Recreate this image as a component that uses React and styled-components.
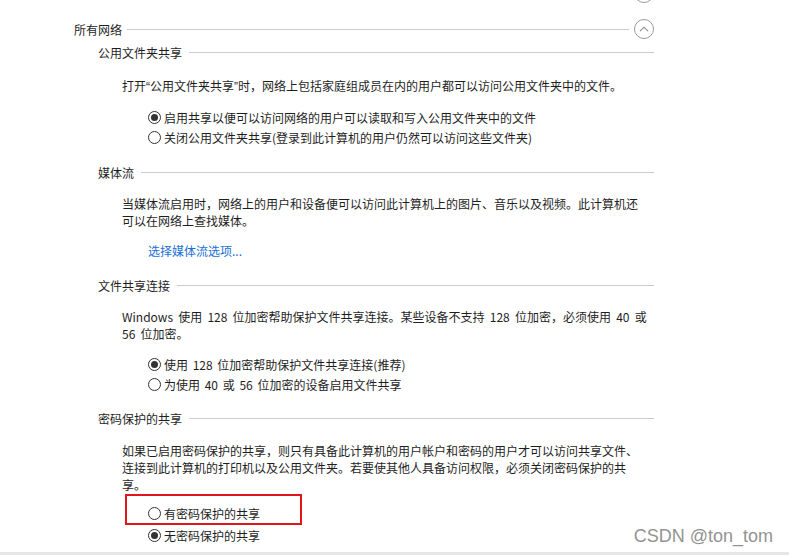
import React from 'react'
import styled, { createGlobalStyle } from 'styled-components'

const GlobalStyle = createGlobalStyle`
  html, body {
    margin: 0;
    padding: 0;
    background: #fff;
  }
  body {
    font-family: "Noto Sans CJK SC", "Noto Sans", sans-serif;
    font-size: 12px;
    color: #1e1e1e;
  }
`;

const Quote = styled.span`
  font-family: "Liberation Sans", Arial, sans-serif;
`;

const sections = [
  {
    title: '公用文件夹共享',
    gap: 5,
    para: [
      <>打开<Quote>“</Quote>公用文件夹共享<Quote>”</Quote>时，网络上包括家庭组成员在内的用户都可以访问公用文件夹中的文件。</>,
    ],
    paraGap: 16,
    radios: [
      { label: '启用共享以便可以访问网络的用户可以读取和写入公用文件夹中的文件', checked: true },
      { label: '关闭公用文件夹共享(登录到此计算机的用户仍然可以访问这些文件夹)' },
    ],
    radioGap: 11,
  },
  {
    title: '媒体流',
    gap: 17,
    para: [
      '当媒体流启用时，网络上的用户和设备便可以访问此计算机上的图片、音乐以及视频。此计算机还',
      '可以在网络上查找媒体。',
    ],
    paraGap: 14,
    link: '选择媒体流选项...',
  },
  {
    title: '文件共享连接',
    gap: 18,
    wide: true,
    para: [
      'Windows 使用 128 位加密帮助保护文件共享连接。某些设备不支持 128 位加密，必须使用 40 或',
      '56 位加密。',
    ],
    paraGap: 14,
    radios: [
      { label: '使用 128 位加密帮助保护文件共享连接(推荐)', checked: true },
      { label: '为使用 40 或 56 位加密的设备启用文件共享' },
    ],
    radioGap: 12,
  },
  {
    title: '密码保护的共享',
    gap: 16,
    para: [
      '如果已启用密码保护的共享，则只有具备此计算机的用户帐户和密码的用户才可以访问共享文件、',
      '连接到此计算机的打印机以及公用文件夹。若要使其他人具备访问权限，必须关闭密码保护的共',
      '享。',
    ],
    paraGap: 15,
    radios: [
      { label: '有密码保护的共享', marked: true },
      { label: '无密码保护的共享', checked: true },
    ],
    radioGap: 1,
  },
];

function Chevron() {
  return (
    <svg width="10" height="6" viewBox="0 0 10 6">
      <path d="M1 5.2 L5 1.2 L9 5.2" fill="none" stroke="#8a8a8a" strokeWidth="1.1" />
    </svg>
  );
}

function Radio({ label, checked, wide }) {
  return (
    <RadioRow $wide={wide}>
      <RadioDot $checked={checked} />
      <span>{label}</span>
    </RadioRow>
  );
}

export default function App() {
  return (
    <Page>
      <GlobalStyle />
      <Stub>
        <CollapseBtn />
      </Stub>
      <SectionHead>
        <span>所有网络</span>
        <Rule />
        <CollapseBtn><Chevron /></CollapseBtn>
      </SectionHead>

      {sections.map((s, i) => (
        <Sub key={i} style={{ marginTop: s.gap }}>
          <SubHead>
            <span>{s.title}</span>
            <Rule />
          </SubHead>
          <Body>
            <Para $wide={s.wide} style={{ marginTop: s.paraGap }}>
              {s.para.map((line, j) => (
                <div key={j}>{line}</div>
              ))}
            </Para>
            {s.link && <Link>{s.link}</Link>}
            {s.radios && (
              <Radios style={{ marginTop: s.radioGap }}>
                {s.radios.map((r, j) =>
                  r.marked ? (
                    <Marked key={j}>
                      <Radio label={r.label} checked={r.checked} />
                    </Marked>
                  ) : (
                    <RadioWrap key={j}>
                      <Radio label={r.label} checked={r.checked} wide={s.wide} />
                    </RadioWrap>
                  )
                )}
              </Radios>
            )}
          </Body>
        </Sub>
      ))}

      <Watermark>CSDN @ton_tom</Watermark>
    </Page>
  );
}

const Page = styled.div`
  position: relative;
  height: 555px;
  box-sizing: border-box;
  border-bottom: 3px solid #e6e6e6;
  overflow: hidden;
  padding-left: 74px;
`;

const Stub = styled.div`
  width: 580px;
  height: 3px;
  display: flex;
  justify-content: flex-end;
  align-items: flex-end;
  overflow: hidden;
`;

const CollapseBtn = styled.div`
  width: 20px;
  height: 20px;
  box-sizing: border-box;
  border: 1px solid #9a9a9a;
  border-radius: 50%;
  display: flex;
  align-items: center;
  justify-content: center;
  flex: none;
  svg {
    margin-top: -1px;
  }
`;

const SectionHead = styled.div`
  width: 580px;
  height: 20px;
  margin-top: 16px;
  display: flex;
  align-items: center;
  gap: 5px;
`;

const Rule = styled.div`
  flex: 1;
  height: 1px;
  background: #cbcbcb;
`;

const Sub = styled.div`
  margin-left: 24px;
  width: 556px;
`;

const SubHead = styled.div`
  height: 17px;
  line-height: 17px;
  display: flex;
  align-items: center;
  gap: 7px;
`;

const Body = styled.div`
  padding-left: 24px;
`;

const Para = styled.div`
  line-height: 17px;
  white-space: nowrap;
  word-spacing: ${p => (p.$wide ? '2.5px' : 'normal')};
`;

const Link = styled.div`
  margin-top: 13px;
  margin-left: 26px;
  line-height: 17px;
  color: #1a6fd6;
`;

const Radios = styled.div`
  display: flex;
  flex-direction: column;
`;

const RadioWrap = styled.div`
  padding-left: 26px;
`;

const Marked = styled.div`
  width: 177px;
  box-sizing: border-box;
  margin-left: 3px;
  border: 2px solid #e0161e;
  padding: 7px 0 0 21px;
`;

const RadioRow = styled.div`
  height: 20px;
  display: flex;
  align-items: center;
  gap: 3px;
  white-space: nowrap;
  word-spacing: ${p => (p.$wide ? '2px' : 'normal')};
`;

const RadioDot = styled.span`
  width: 13px;
  height: 13px;
  box-sizing: border-box;
  border-radius: 50%;
  border: 1px solid #333;
  display: flex;
  align-items: center;
  justify-content: center;
  flex: none;
  &::after {
    content: '';
    width: 7px;
    height: 7px;
    border-radius: 50%;
    background: #333;
    display: ${p => (p.$checked ? 'block' : 'none')};
  }
`;

const Watermark = styled.div`
  position: absolute;
  right: 16px;
  top: 526px;
  font-family: "Liberation Sans", Arial, sans-serif;
  font-size: 18px;
  line-height: 21px;
  color: #939393;
`;
